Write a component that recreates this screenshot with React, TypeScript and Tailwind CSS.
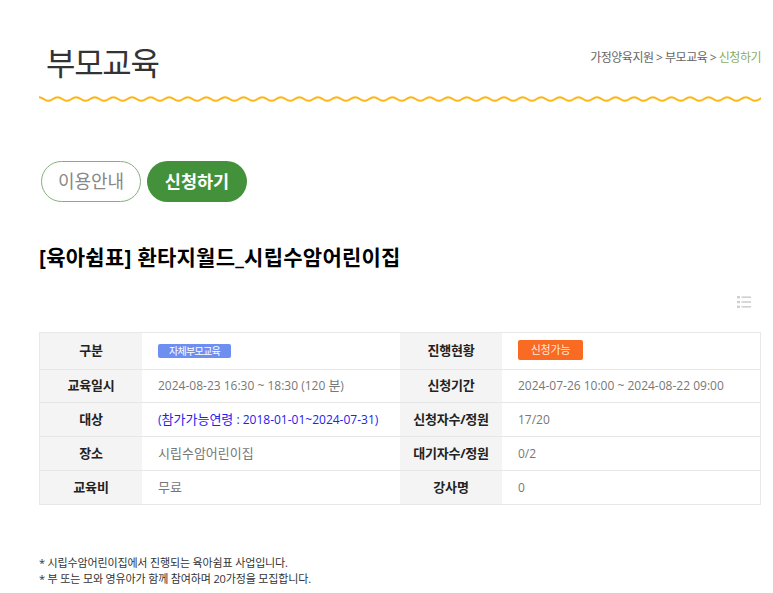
import type { ReactNode } from "react";

const K = ({ children }: { children: ReactNode }) => <span className="text-[13px]">{children}</span>;

const rows: { h: string; a: string; b: string; av: ReactNode; bv: ReactNode }[] = [
  {
    h: "h-[36px]",
    a: "구분",
    b: "진행현황",
    av: (
      <span className="inline-flex h-[14px] w-[73px] items-center justify-center rounded-[2px] bg-[#6f8ff0] text-[10px] tracking-[-0.7px] text-white">
        자체부모교육
      </span>
    ),
    bv: (
      <span className="inline-flex h-[20px] w-[65px] -translate-y-[1px] items-center justify-center rounded-[2px] bg-[#f96a23] text-[11px] tracking-[-0.2px] text-[#ffe9dc]">
        신청가능
      </span>
    ),
  },
  {
    h: "h-[33px]",
    a: "교육일시",
    b: "신청기간",
    av: (
      <span>
        2024-08-23 16:30 ~ 18:30 (120 <K>분</K>)
      </span>
    ),
    bv: "2024-07-26 10:00 ~ 2024-08-22 09:00",
  },
  {
    h: "h-[34px]",
    a: "대상",
    b: "신청자수/정원",
    av: (
      <span className="text-[#2222ee]">
        (<K>참가가능연령</K> : 2018-01-01~2024-07-31)
      </span>
    ),
    bv: "17/20",
  },
  { h: "h-[34px]", a: "장소", b: "대기자수/정원", av: <K>시립수암어린이집</K>, bv: "0/2" },
  { h: "h-[34px]", a: "교육비", b: "강사명", av: <K>무료</K>, bv: "0" },
];

export default function App() {
  return (
    <div
      className="h-[593px] w-[773px] overflow-hidden bg-white pl-[39px] pr-[12px]"
      style={{ fontFamily: '"Open Sans", "Noto Sans CJK KR", sans-serif' }}
    >
      <div className="flex h-[96px] items-start justify-between pt-[40px]">
        <h1 className="pl-[7px] text-[32px] leading-[46px] font-normal tracking-[-1.3px] text-[#333333]">부모교육</h1>
        <div className="pt-[10px] text-[12px] leading-[16px] tracking-[-0.5px] text-[#666666]">
          가정양육지원 &gt; 부모교육 &gt; <span className="text-[#8cab5c]">신청하기</span>
        </div>
      </div>
      <svg className="block h-[6px] w-[722px]" viewBox="0 0 722 6">
        <defs>
          <pattern id="wave" width="18.6" height="6" patternUnits="userSpaceOnUse">
            <path d="M0 1.2 C4.65 1.2 4.65 4.8 9.3 4.8 C13.95 4.8 13.95 1.2 18.6 1.2" fill="none" stroke="#fdb515" strokeWidth="2" />
          </pattern>
        </defs>
        <rect width="722" height="6" fill="url(#wave)" />
      </svg>
      <div className="mt-[59px] flex gap-[6px] pl-[2px]">
        <div className="flex h-[41px] w-[100px] items-center justify-center rounded-full border border-[#85b07c] text-[18px] text-[#888888]">
          이용안내
        </div>
        <div className="flex h-[41px] w-[100px] items-center justify-center rounded-full bg-[#43913a] text-[17.5px] font-bold text-white">
          신청하기
        </div>
      </div>
      <h2 className="mt-[41px] text-[21px] leading-[28px] font-bold tracking-[0.25px] text-black">[육아쉼표] 환타지월드_시립수암어린이집</h2>
      <div className="mt-[24px] flex h-[14px] justify-end pr-[10px]">
        <svg width="14" height="14" viewBox="0 0 14 14" fill="#cfcfcf">
          <rect x="0" y="1" width="3" height="2.4" />
          <rect x="4.5" y="1.4" width="9.5" height="1.6" />
          <rect x="0" y="5.8" width="3" height="2.4" />
          <rect x="4.5" y="6.2" width="9.5" height="1.6" />
          <rect x="0" y="10.6" width="3" height="2.4" />
          <rect x="4.5" y="11" width="9.5" height="1.6" />
        </svg>
      </div>
      <div className="mt-[23px] border border-[#e8e8e8] text-[12px]">
        {rows.map((r, i) => (
          <div key={r.a} className={`grid grid-cols-[102px_258px_102px_258px] ${r.h} ${i > 0 ? "border-t border-[#e6e6e6]" : ""}`}>
            <div className="flex items-center justify-center bg-[#f4f4f4] text-[13px] font-bold tracking-[-0.2px] text-[#222222]">{r.a}</div>
            <div className="flex items-center pl-[16px] text-[#777777]">{r.av}</div>
            <div className="flex items-center justify-center bg-[#f4f4f4] text-[13px] font-bold tracking-[-0.2px] text-[#222222]">{r.b}</div>
            <div className="flex items-center pl-[16px] text-[#777777]">{r.bv}</div>
          </div>
        ))}
      </div>
      <div className="mt-[50px] text-[11px] leading-[16px] tracking-[-0.15px] text-[#333333]">
        <p>* 시립수암어린이집에서 진행되는 육아쉼표 사업입니다.</p>
        <p>* 부 또는 모와 영유아가 함께 참여하며 20가정을 모집합니다.</p>
      </div>
    </div>
  );
}
